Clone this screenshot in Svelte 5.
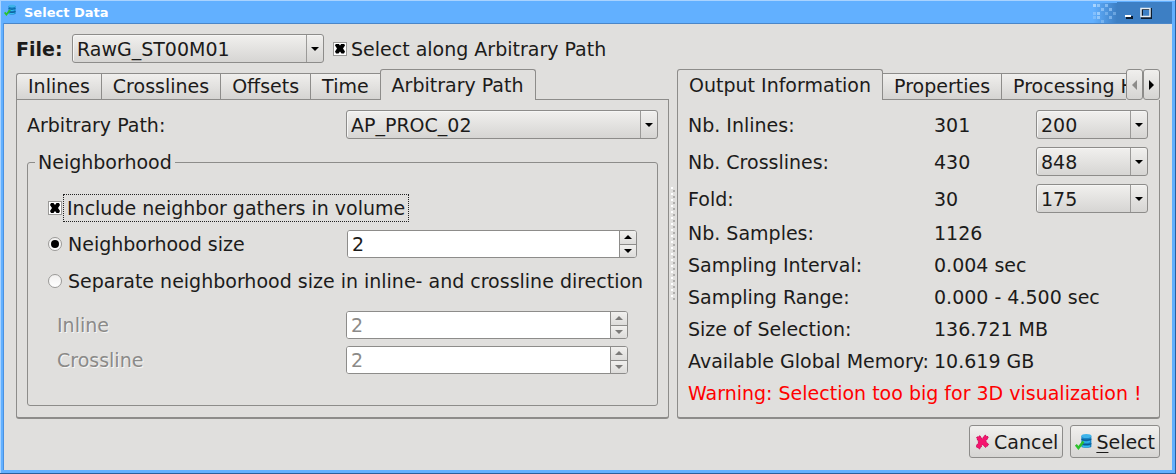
<script>
  let alongPath = $state(true);
  let includeNeighbors = $state(true);
  let mode = $state('single');
  let size = $state(2);
  let inlineSize = $state(2);
  let crosslineSize = $state(2);

  const pathTabs = ['Inlines', 'Crosslines', 'Offsets', 'Time', 'Arbitrary Path'];
  const infoTabs = ['Output Information', 'Properties', 'Processing H'];
  let pathTab = $state('Arbitrary Path');
  let infoTab = $state('Output Information');

  const rows = [
    { label: 'Nb. Inlines:', value: '301', choice: '200' },
    { label: 'Nb. Crosslines:', value: '430', choice: '848' },
    { label: 'Fold:', value: '30', choice: '175' },
    { label: 'Nb. Samples:', value: '1126' },
    { label: 'Sampling Interval:', value: '0.004 sec' },
    { label: 'Sampling Range:', value: '0.000 - 4.500 sec' },
    { label: 'Size of Selection:', value: '136.721 MB' },
    { label: 'Available Global Memory:', value: '10.619 GB' }
  ];

  // Column, row and opacity of each square in the title bar's dissolve.
  const pixels = [
    [0, 0, 1], [1, 0, 0.7], [3, 0, 0.6], [2, 1, 0.6], [4, 1, 0.6], [0, 2, 0.5], [1, 2, 0.8],
    [3, 2, 0.4], [5, 2, 0.4], [0, 3, 0.4], [1, 3, 0.7], [4, 3, 0.5], [2, 4, 0.4]
  ];
</script>

{#snippet combo(id, label, value)}
  <span class="combo">
    <select {id} aria-label={label}><option>{value}</option></select>
    <span class="drop"><svg width="8" height="4" viewBox="0 0 8 4"><path d="M0 0h8L4 4z" /></svg></span>
  </span>
{/snippet}

{#snippet spinButtons(disabled, step)}
  <span class="steps">
    <button type="button" {disabled} aria-label="Increase" onclick={() => step(1)}>
      <svg width="8" height="4" viewBox="0 0 8 4"><path d="M0 4h8L4 0z" /></svg>
    </button>
    <button type="button" {disabled} aria-label="Decrease" onclick={() => step(-1)}>
      <svg width="8" height="4" viewBox="0 0 8 4"><path d="M0 0h8L4 4z" /></svg>
    </button>
  </span>
{/snippet}

{#snippet dataIcon(px)}
  <svg class="icon" width={px} height={px} viewBox="0 0 16 16">
    <path d="M6 2.500V13c0 1.200 9.400 1.200 9.400 0V2.500z" fill="#1583c4" />
    <path d="M6 5.200c1.500 1.300 7.500 1.300 9.400 0v1.200c-1.900 1.300-7.900 1.300-9.400 0zM6 9.400c1.500 1.300 7.500 1.300 9.400 0v1.200c-1.900 1.300-7.900 1.300-9.400 0z" fill="#0d5a92" />
    <path d="M7 7.300c2 .8 5 .8 7 .1v1.300c-2 .7-5 .7-7 0zM7 11.500c2 .8 5 .8 7 .1v1.300c-2 .7-5 .7-7 0z" fill="#36bdf0" />
    <ellipse cx="10.700" cy="2.800" rx="4.700" ry="1.900" fill="#3fb4ea" />
    <path d="M.8 11.200l2.400 2.900L8 8" fill="none" stroke="#2cc22c" stroke-width="2.400" />
  </svg>
{/snippet}

<main class="window">
  <header>
    {@render dataIcon(12)}
    <h1>Select Data</h1>
    <svg class="dither" width="24" height="20" viewBox="0 0 24 20" shape-rendering="crispEdges">
      {#each pixels as [x, y, o]}
        <rect x={x * 4} y={y * 4 + 1} width="3" height="3" fill="#a8d4ff" opacity={o} />
      {/each}
    </svg>
    <div class="controls">
      <button type="button" aria-label="Minimize">
        <svg width="9" height="12" viewBox="0 0 9 12"><path d="M2 9h7v3H2z" fill="#0b1c30" /><path d="M1 8h6v2H1z" fill="#fff" /></svg>
      </button>
      <button type="button" aria-label="Maximize">
        <svg width="12" height="12" viewBox="0 0 12 12"><path d="M2 2h9v9H2z" fill="none" stroke="#0b1c30" stroke-width="2" /><path d="M1 1.500h9V9.500H1z" fill="none" stroke="#e8eef4" stroke-width="1.500" /></svg>
      </button>
    </div>
  </header>

  <div class="content">
    <div class="file-row">
      <label class="file-label" for="file">File:</label>
      <div class="file-combo">{@render combo('file', 'File', 'RawG_ST00M01')}</div>
      <label class="option"><input type="checkbox" bind:checked={alongPath} /><span>Select along Arbitrary Path</span></label>
    </div>

    <div class="panes">
      <section class="pane path-pane">
        <div class="tabs" role="tablist">
          {#each pathTabs as tab}
            <button type="button" role="tab" aria-selected={tab === pathTab} onclick={() => (pathTab = tab)}>{tab}</button>
          {/each}
          <span class="rule"></span>
        </div>
        <div class="body path-body">
          <div class="path-row">
            <label for="path">Arbitrary Path:</label>
            {@render combo('path', 'Arbitrary Path', 'AP_PROC_02')}
          </div>
          <fieldset>
            <legend>Neighborhood</legend>
            <label class="option focused"><input type="checkbox" bind:checked={includeNeighbors} /><span>Include neighbor gathers in volume</span></label>
            <div class="size-row">
              <label class="option"><input type="radio" value="single" bind:group={mode} /><span>Neighborhood size</span></label>
              <span class="spin">
                <input type="text" aria-label="Neighborhood size" bind:value={size} />
                {@render spinButtons(false, (d) => (size = +size + d))}
              </span>
            </div>
            <label class="option separate"><input type="radio" value="separate" bind:group={mode} /><span>Separate neighborhood size in inline- and crossline direction</span></label>
            <div class="sub-row">
              <label for="inline">Inline</label>
              <span class="spin">
                <input id="inline" type="text" bind:value={inlineSize} disabled={mode === 'single'} />
                {@render spinButtons(mode === 'single', (d) => (inlineSize = +inlineSize + d))}
              </span>
            </div>
            <div class="sub-row">
              <label for="crossline">Crossline</label>
              <span class="spin">
                <input id="crossline" type="text" bind:value={crosslineSize} disabled={mode === 'single'} />
                {@render spinButtons(mode === 'single', (d) => (crosslineSize = +crosslineSize + d))}
              </span>
            </div>
          </fieldset>
        </div>
      </section>

      <div class="splitter"></div>

      <section class="pane info-pane">
        <div class="tabs">
          <div class="tab-clip" role="tablist">
            {#each infoTabs as tab}
              <button type="button" role="tab" aria-selected={tab === infoTab} onclick={() => (infoTab = tab)}>{tab}</button>
            {/each}
          </div>
          <div class="scrollers">
            <button type="button" aria-label="Scroll tabs left" disabled><svg width="5" height="10" viewBox="0 0 5 10"><path d="M5 0v10L0 5z" /></svg></button>
            <button type="button" aria-label="Scroll tabs right"><svg width="5" height="10" viewBox="0 0 5 10"><path d="M0 0v10l5-5z" /></svg></button>
          </div>
        </div>
        <div class="body info-body">
          <table>
            <tbody>
              {#each rows as row}
                <tr class:with-choice={row.choice}>
                  <th scope="row">{row.label}</th>
                  <td colspan={row.choice ? 1 : 2}>{row.value}</td>
                  {#if row.choice}
                    <td class="choice">{@render combo(undefined, row.label, row.choice)}</td>
                  {/if}
                </tr>
              {/each}
            </tbody>
          </table>
          <p class="warning">Warning: Selection too big for 3D visualization !</p>
        </div>
      </section>
    </div>

    <footer>
      <button type="button" class="action">
        <svg width="16" height="16" viewBox="0 0 16 16"><path d="M2.500 3.500L6 1.800 8.200 5 11 1l3.400 2.200-2.600 4 3 3.600-3.300 2.600L8.600 10.600 5.600 15 2 12.500l2.600-4.300z" fill="#f5146e" stroke="#c40f57" stroke-width="1" stroke-dasharray="2 1" /></svg>
        <span>Cancel</span>
      </button>
      <button type="button" class="action">{@render dataIcon(17)}<span><u>S</u>elect</span></button>
    </footer>
  </div>
</main>

<style>
  :global(body) { background: #e0dfdd; }
  * { box-sizing: border-box; }
  .window {
    min-height: 100vh;
    padding: 2px 3px 3px 4px;
    background: #62b0ff;
    border: solid #2a5f9c;
    border-width: 0 1px 1px 0;
    box-shadow: inset 1px 1px #a9d3ff;
    font: 19px/28px "DejaVu Sans", sans-serif;
    color: #1c1b1a;
    display: flex;
    flex-direction: column;
  }
  button, input, select { font: inherit; color: inherit; margin: 0; padding: 0; }
  header { display: flex; align-items: center; height: 21px; color: #fff; }
  header .icon { margin-bottom: 6px; }
  h1 { flex: 1; margin: 0; padding: 0 0 0 8px; font-size: 13px; line-height: 18px; }
  .dither { background: linear-gradient(90deg, #62b0ff, #3d7fc4); }
  .controls { display: flex; gap: 7px; align-self: stretch; align-items: center; padding: 0 20px 0 7px; background: #3d7fc4; }
  .controls button { display: flex; border: 0; background: none; }
  .content {
    flex: 1;
    background: #e0dfdd;
    border-top: 1px solid #4a86c8;
    box-shadow: -1px 0 #4a92e2;
    padding: 10px 12px 12px;
    display: flex;
    flex-direction: column;
  }
  .file-row { display: flex; align-items: center; height: 29px; }
  .file-label { width: 56px; font-weight: bold; }
  .file-combo { display: flex; width: 252px; margin-right: 9px; }

  .combo { position: relative; display: flex; flex: 1; min-width: 0; height: 29px; }
  .combo select {
    appearance: none;
    width: 100%;
    border: 1px solid #8d8c8a;
    border-radius: 3px;
    padding: 0 20px 0 4px;
    background: linear-gradient(#f1f0ee, #d6d5d3);
    box-shadow: inset 1px 1px #f6f6f5;
  }
  .drop {
    position: absolute;
    inset: 1px 1px 1px auto;
    width: 17px;
    border-left: 1px solid #9b9a98;
    display: grid;
    place-items: center;
    pointer-events: none;
  }
  .option { display: flex; align-items: center; gap: 4px; }
  .option input {
    appearance: none;
    flex: none;
    width: 14px;
    height: 14px;
    border: 1px solid #9b9a98;
    background: #fff;
    display: grid;
    place-items: center;
  }
  .option input[type="radio"] { border-radius: 50%; background: linear-gradient(#f1f0ef, #fff); }
  .option input[type="radio"]:checked::before { content: ""; width: 8px; height: 8px; border-radius: 50%; background: #000; }
  .option input[type="checkbox"]:checked::before {
    content: "";
    width: 10px;
    height: 10px;
    background: #000;
    clip-path: polygon(10% 0, 35% 0, 50% 20%, 65% 0, 90% 0, 100% 20%, 80% 50%, 100% 80%, 90% 100%, 65% 100%, 50% 80%, 35% 100%, 10% 100%, 0 80%, 20% 50%, 0 20%);
  }

  .panes { display: flex; padding-top: 6px; }
  .pane { display: flex; flex-direction: column; min-width: 0; }
  .path-pane { flex: 653 1 0; }
  .info-pane { flex: 483 1 0; }
  .body {
    flex: 1;
    border: 1px solid #8d8c8a;
    border-top: 0;
    border-bottom-width: 2px;
    border-radius: 0 0 3px 3px;
  }
  .tabs { display: flex; align-items: flex-end; height: 31px; }
  .tabs [role="tab"] {
    flex: none;
    height: 27px;
    padding: 0 11px;
    line-height: 25px;
    white-space: nowrap;
    border: 1px solid #8d8c8a;
    border-right-width: 0;
    background: linear-gradient(#f0efed, #d5d4d2);
  }
  .tabs [role="tab"]:first-child { border-top-left-radius: 3px; }
  .tabs [role="tab"][aria-selected="true"] {
    height: 31px;
    line-height: 28px;
    border-right-width: 1px;
    border-bottom: 0;
    border-radius: 3px 3px 0 0;
    background: #e0dfdd;
  }
  .tabs [aria-selected="true"] + [role="tab"] { border-left-width: 0; }
  .rule { flex: 1; height: 1px; background: #8d8c8a; }
  .tab-clip { display: flex; align-items: flex-end; flex: 1; min-width: 0; overflow: hidden; }
  .scrollers { display: flex; align-self: flex-start; }
  .scrollers button {
    width: 17px;
    height: 31px;
    display: grid;
    place-items: center;
    border: 1px solid #8d8c8a;
    border-radius: 3px;
    background: linear-gradient(#f0efed, #d5d4d2);
  }
  .scrollers button:disabled { fill: #8d8c8a; }

  .path-body { padding: 10px 10px 9px; }
  .path-row { display: grid; grid-template-columns: 319px 1fr; align-items: center; }
  fieldset {
    margin: 9px 0 0;
    padding: 19px 20px 31px;
    border: 1px solid #8d8c8a;
    border-radius: 3px;
    min-width: 0;
  }
  legend { margin-left: -13px; padding: 0 3px; }
  .focused { gap: 2px; }
  .focused span { outline: 1px dotted #222; padding: 0 3px; line-height: 26px; }
  .size-row { display: grid; grid-template-columns: 299px 1fr; align-items: center; height: 28px; margin-top: 9px; }
  .size-row .option, .separate { gap: 6px; }
  .separate { margin-top: 9px; height: 28px; white-space: nowrap; }
  .sub-row { display: grid; grid-template-columns: 289px 1fr; align-items: center; height: 28px; margin: 7px 9px 0; color: #8b8a88; text-shadow: 1px 1px #f6f6f5; }
  .separate + .sub-row { margin-top: 16px; }
  .spin { display: flex; min-width: 0; height: 28px; border: 1px solid #8d8c8a; border-radius: 3px; background: #fff; overflow: hidden; }
  .spin input { flex: 1; min-width: 0; border: 0; padding: 0 4px; background: #fff; }
  .spin input:disabled { color: #8b8a88; }
  .steps { display: flex; flex-direction: column; width: 17px; border-left: 1px solid #8d8c8a; }
  .steps button { flex: 1; display: grid; place-items: center; border: 0; background: linear-gradient(#f1f0ee, #dddcda); }
  .steps button + button { border-top: 1px solid #8d8c8a; }
  .steps button:disabled { fill: #7c7b79; }

  .splitter {
    width: 8px;
    padding: 0 2px;
    display: flex;
    align-items: center;
  }
  .splitter::before {
    content: "";
    width: 4px;
    height: 114px;
    background:
      radial-gradient(circle at 1px 1px, #fff 1px, transparent 1px) 0 0 / 4px 6px,
      radial-gradient(circle at 3px 4px, #b0afad 1px, transparent 1px) 0 0 / 4px 6px;
  }

  .info-body { padding: 6px 11px 8px 10px; }
  table { width: 100%; border-collapse: collapse; table-layout: fixed; }
  tr { height: 32px; }
  tr.with-choice { height: 37px; }
  th { width: 246px; text-align: left; font-weight: normal; white-space: nowrap; }
  th, td { padding: 0; line-height: 24px; }
  .choice { width: 112px; }
  .warning { margin: 0; line-height: 32px; color: #f00; white-space: nowrap; }

  footer { display: flex; justify-content: flex-end; gap: 7px; padding-top: 6px; }
  .action {
    display: flex;
    align-items: center;
    gap: 4px;
    height: 33px;
    padding: 0 4px;
    border: 1px solid #8d8c8a;
    border-radius: 3px;
    background: linear-gradient(#f1f0ee, #d6d5d3);
  }
  u { text-underline-offset: 3px; text-decoration-thickness: 1px; }
</style>
